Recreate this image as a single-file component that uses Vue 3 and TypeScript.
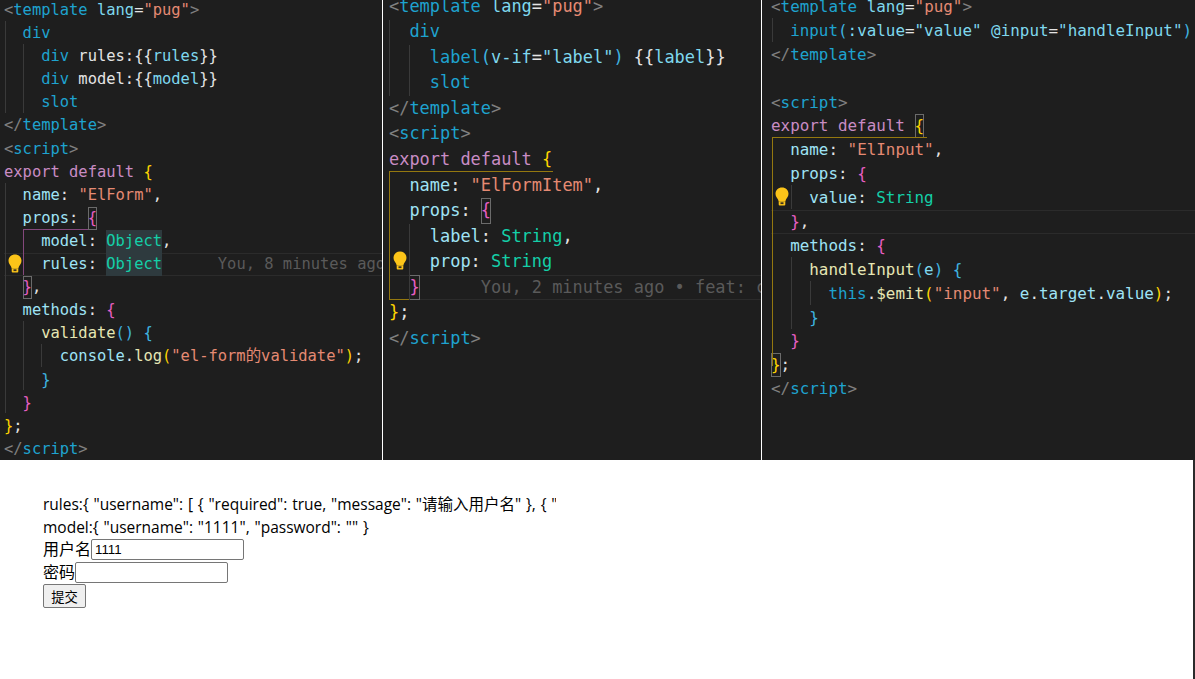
<script setup lang="ts">
type Tok = [string, string];
type Line = Tok[];
interface Mark { x: number; y: number; w: number; h: number; c: string }
interface Pane { name: string; lines: Line[]; marks: Mark[]; bulb: [number, number] }

const B = (s: string): Tok => ['br', s];
const T = (s: string): Tok => ['tag', s];
const A = (s: string): Tok => ['attr', s];
const S = (s: string): Tok => ['str', s];
const P = (s: string): Tok => ['plain', s];
const K = (s: string): Tok => ['kw', s];
const N = (s: string): Tok => ['prop', s];
const Y = (s: string): Tok => ['type', s];
const G = (s: string): Tok => ['gold', s];
const M = (s: string): Tok => ['pink', s];
const L = (s: string): Tok => ['blue', s];
const F = (s: string): Tok => ['fn', s];
const H = (s: string): Tok => ['ghost', s];

const open = (n: string): Tok[] => [B('<'), T(n), B('>')];
const close = (n: string): Tok[] => [B('</'), T(n), B('>')];
const tpl: Tok[] = [B('<'), T('template'), P(' '), A('lang'), P('='), S('"pug"'), B('>')];
const guide = '#3a3a3a';
const yellow = '#94780f';
const plum = '#84487c';

const panes: Pane[] = [
  {
    name: 'left',
    bulb: [8, 254],
    lines: [
      tpl,
      [P('  '), T('div')],
      [P('    '), T('div'), P(' rules:{{'), A('rules'), P('}}')],
      [P('    '), T('div'), P(' model:{{'), A('model'), P('}}')],
      [P('    '), T('slot')],
      close('template'),
      open('script'),
      [K('export default '), G('{')],
      [P('  '), N('name'), P(': '), S('"ElForm"'), P(',')],
      [P('  '), N('props'), P(': '), ['pink box', '{']],
      [P('    '), N('model'), P(': '), ['type sel', 'Object'], P(',')],
      [P('    '), N('rules'), P(': '), ['type sel', 'Object'], H('      You, 8 minutes ago')],
      [P('  '), ['pink box', '}'], P(',')],
      [P('  '), N('methods'), P(': '), M('{')],
      [P('    '), F('validate'), L('()'), P(' '), L('{')],
      [P('      '), N('console'), P('.'), F('log'), G('('), S('"el-form的validate"'), G(')'), P(';')],
      [P('    '), L('}')],
      [P('  '), M('}')],
      [G('}'), P(';')],
      close('script'),
    ],
    marks: [
      { x: 5, y: 21, w: 1, h: 92, c: guide },
      { x: 23, y: 44, w: 1, h: 69, c: guide },
      { x: 5, y: 183, w: 1, h: 230, c: guide },
      { x: 23, y: 229, w: 1, h: 46, c: plum },
      { x: 23, y: 229, w: 65, h: 1, c: plum },
      { x: 23, y: 321, w: 1, h: 69, c: guide },
      { x: 41, y: 344, w: 1, h: 23, c: guide },
    ],
  },
  {
    name: 'mid',
    bulb: [10, 251],
    lines: [
      tpl,
      [P('  '), T('div')],
      [P('    '), T('label'), L('('), A('v-if'), P('='), A('"label"'), L(')'), P(' {{'), A('label'), P('}}')],
      [P('    '), T('slot')],
      close('template'),
      open('script'),
      [K('export default '), G('{')],
      [P('  '), N('name'), P(': '), S('"ElFormItem"'), P(',')],
      [P('  '), N('props'), P(': '), ['pink box', '{']],
      [P('    '), N('label'), P(': '), Y('String'), P(',')],
      [P('    '), N('prop'), P(': '), Y('String')],
      [P('  '), ['pink box', '}'], H('      You, 2 minutes ago • feat: c')],
      [G('}'), P(';')],
      close('script'),
    ],
    marks: [
      { x: 6, y: 20, w: 1, h: 76, c: guide },
      { x: 26, y: 45, w: 1, h: 51, c: guide },
      { x: 6, y: 171, w: 1, h: 129, c: yellow },
      { x: 6, y: 171, w: 164, h: 1, c: yellow },
      { x: 6, y: 299, w: 20, h: 1, c: yellow },
      { x: 26, y: 224, w: 1, h: 76, c: guide },
    ],
  },
  {
    name: 'right',
    bulb: [13, 187],
    lines: [
      tpl,
      [P('  '), T('input'), L('('), A(':value'), P('='), A('"value"'), P(' '), A('@input'), P('='), A('"handleInput"'), L(')')],
      close('template'),
      [],
      open('script'),
      [K('export default '), ['gold box', '{']],
      [P('  '), N('name'), P(': '), S('"ElInput"'), P(',')],
      [P('  '), N('props'), P(': '), M('{')],
      [P('    '), N('value'), P(': '), Y('String')],
      [P('  '), M('}'), P(',')],
      [P('  '), N('methods'), P(': '), M('{')],
      [P('    '), F('handleInput'), L('('), A('e'), L(')'), P(' '), L('{')],
      [P('      '), T('this'), P('.'), F('$emit'), G('('), S('"input"'), P(', '), N('e'), P('.'), N('target'), P('.'), N('value'), G(')'), P(';')],
      [P('    '), L('}')],
      [P('  '), M('}')],
      [['gold box', '}'], P(';')],
      close('script'),
    ],
    marks: [
      { x: 10, y: 18, w: 1, h: 24, c: guide },
      { x: 10, y: 137, w: 155, h: 1, c: yellow },
      { x: 10, y: 138, w: 1, h: 228, c: yellow },
      { x: 29, y: 185, w: 1, h: 24, c: guide },
      { x: 29, y: 257, w: 1, h: 72, c: guide },
      { x: 48, y: 281, w: 1, h: 24, c: guide },
    ],
  },
];

const current: Record<string, number> = { left: 11, mid: 11, right: 9 };
</script>

<template>
  <div class="page">
    <div class="editors">
      <section v-for="pane in panes" :key="pane.name" class="pane" :class="pane.name">
        <div class="code">
          <div
            v-for="(line, i) in pane.lines"
            :key="i"
            class="line"
            :class="{ cur: current[pane.name] === i }"
          ><span v-for="(tok, j) in line" :key="j" :class="tok[0]">{{ tok[1] }}</span></div>
        </div>
        <i
          v-for="(m, i) in pane.marks"
          :key="'m' + i"
          class="mark"
          :style="{ left: m.x + 'px', top: m.y + 'px', width: m.w + 'px', height: m.h + 'px', background: m.c }"
        ></i>
        <svg
          class="bulb"
          :style="{ left: pane.bulb[0] + 'px', top: pane.bulb[1] + 'px' }"
          width="14"
          height="19"
          viewBox="0 0 14 19"
        >
          <path d="M7 0.5C3.2 0.5 0.5 3.2 0.5 6.8c0 2.6 1.6 4 2.5 5.6.4.7.5 1.2.5 1.8h7c0-.6.1-1.1.5-1.8.9-1.6 2.5-3 2.5-5.6C13.500 3.200 10.800 0.500 7 0.500Z" fill="#fcc419" />
          <path d="M3.700 14.200h6.600v3.300a1 1 0 0 1-1 1H4.700a1 1 0 0 1-1-1Z" fill="#fcc419" />
          <rect x="5.500" y="15.300" width="3" height="1.800" fill="#3a3220" />
        </svg>
      </section>
    </div>
    <main class="demo">
      <div class="clip">rules:{ "username": [ { "required": true, "message": "请输入用户名" }, { "min": 6 } ] }</div>
      <div>model:{ "username": "1111", "password": "" }</div>
      <div class="field"><label>用户名</label><input value="1111" /></div>
      <div class="field"><label>密码</label><input /></div>
      <button type="button">提交</button>
    </main>
  </div>
</template>

<style scoped>
.page {
  width: 1195px;
  height: 679px;
  overflow: hidden;
  background: #fff;
}
.editors {
  display: flex;
  height: 460px;
  background: #fff;
}
.pane {
  position: relative;
  height: 460px;
  overflow: hidden;
  background: #1e1e1e;
  font-family: "DejaVu Sans Mono", "Noto Sans CJK SC", monospace;
}
.left {
  width: 382px;
  margin-right: 1px;
  font-size: 15.45px;
}
.mid {
  width: 378px;
  margin-right: 1px;
  font-size: 16.95px;
}
.right {
  flex: 1;
  font-size: 15.9px;
}
.code {
  white-space: pre;
}
.left .code {
  margin-top: -1px;
  padding-left: 4px;
  line-height: 23.1px;
}
.mid .code {
  margin-top: -6.3px;
  padding-left: 6px;
  line-height: 25.55px;
}
.right .code {
  margin-top: -5px;
  padding-left: 9px;
  line-height: 23.9px;
}
.line {
  height: 1lh;
}
.cur {
  box-shadow: inset 0 1px #2b2b2b, inset 0 -1px #2b2b2b;
}
.mark {
  position: absolute;
  display: block;
}
.bulb {
  position: absolute;
}
.br { color: #808080; }
.tag { color: #1ea3cf; }
.attr { color: #7fd8ee; }
.str { color: #e58a73; }
.plain { color: #e4e4e4; }
.kw { color: #c98cc4; }
.prop { color: #9fe3f5; }
.type { color: #14cfa8; }
.gold { color: #ffd500; }
.pink { color: #e85ec4; }
.blue { color: #3fb4e0; }
.fn { color: #e6e6b4; }
.ghost { color: #5a5a5a; }
.sel {
  display: inline-block;
  background: #2e3a3e;
}
.box {
  display: inline-block;
  box-shadow: inset 0 0 0 1px #6b6b6b;
}
.demo {
  height: 219px;
  box-sizing: border-box;
  padding: 33px 0 0 43px;
  border-right: 2px solid #2b2b2b;
  font-family: "Open Sans", "Noto Sans CJK SC", sans-serif;
  font-size: 15.5px;
  word-spacing: 0.8px;
  line-height: 22.6px;
  color: #000;
}
.clip {
  width: 513px;
  overflow: hidden;
  white-space: nowrap;
}
.field {
  display: flex;
  align-items: center;
  height: 23px;
  font-size: 16px;
}
.field input {
  width: 153px;
  height: 21px;
  box-sizing: border-box;
  padding: 1px 3px;
  border: 1px solid #767676;
  border-radius: 2px;
  font-family: "Liberation Sans", sans-serif;
  font-size: 13.3px;
}
button {
  display: block;
  width: 43px;
  height: 24px;
  padding: 0;
  border: 1px solid #767676;
  border-radius: 2px;
  background: #efefef;
  font-family: "Noto Sans CJK SC", sans-serif;
  font-size: 13.3px;
  color: #000;
}
</style>

<style>
body {
  margin: 0;
}
</style>
